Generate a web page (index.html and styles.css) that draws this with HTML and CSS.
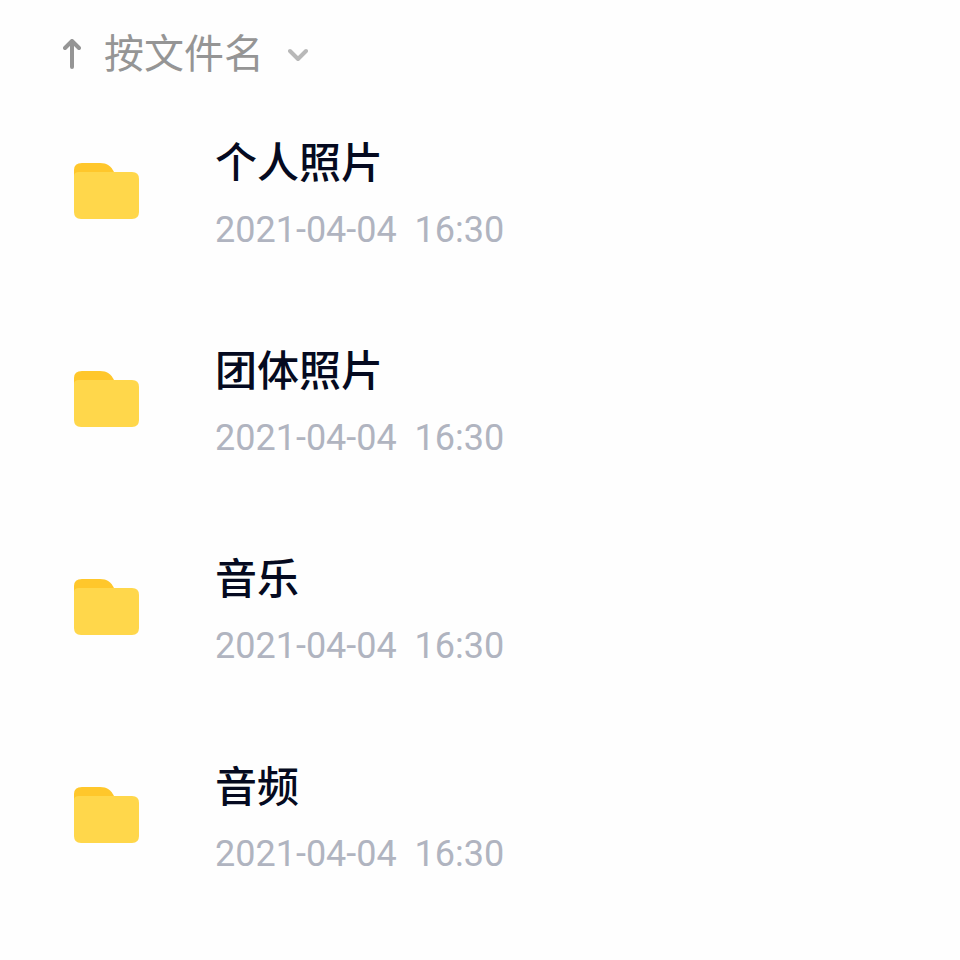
FILE: index.html
```html
<!DOCTYPE html>
<html lang="zh-CN">
<head>
<meta charset="UTF-8" />
<meta name="viewport" content="width=device-width, initial-scale=1" />
<title>文件列表</title>
<link rel="stylesheet" href="styles.css">
</head>
<body>

<!-- 文件夹图标，列表中重复使用 -->
<svg class="sprite" aria-hidden="true">
  <symbol id="folder" viewBox="0 0 66 58">
    <path fill="#ffc72b" d="M0 20V8Q0 1 8 1H26C33 1 37 4 40 10V20Z"/>
    <path fill="#ffd74b" d="M0 14Q0 10 5 10H58Q65 10 65 17V50Q65 57 58 57H7Q0 57 0 50Z"/>
  </symbol>
</svg>

<header class="toolbar">
  <button class="sort" type="button">
    <svg class="sort-arrow" viewBox="0 0 18 32" aria-hidden="true">
      <path d="M9 28V2M2 9L9 2L16 9"/>
    </svg>
    <span class="sort-label">按文件名</span>
    <svg class="sort-caret" viewBox="0 0 20 14" aria-hidden="true">
      <path d="M2 3L10 11L18 3"/>
    </svg>
  </button>
</header>

<main>
  <ul class="file-list">
    <li class="file">
      <svg class="file-icon" aria-hidden="true"><use href="#folder"/></svg>
      <div class="file-info">
        <div class="file-name">个人照片</div>
        <time class="file-time" datetime="2021-04-04T16:30">2021-04-04  16:30</time>
      </div>
    </li>
    <li class="file">
      <svg class="file-icon" aria-hidden="true"><use href="#folder"/></svg>
      <div class="file-info">
        <div class="file-name">团体照片</div>
        <time class="file-time" datetime="2021-04-04T16:30">2021-04-04  16:30</time>
      </div>
    </li>
    <li class="file">
      <svg class="file-icon" aria-hidden="true"><use href="#folder"/></svg>
      <div class="file-info">
        <div class="file-name">音乐</div>
        <time class="file-time" datetime="2021-04-04T16:30">2021-04-04  16:30</time>
      </div>
    </li>
    <li class="file">
      <svg class="file-icon" aria-hidden="true"><use href="#folder"/></svg>
      <div class="file-info">
        <div class="file-name">音频</div>
        <time class="file-time" datetime="2021-04-04T16:30">2021-04-04  16:30</time>
      </div>
    </li>
  </ul>
</main>

</body>
</html>
```
FILE: styles.css
```css
* { box-sizing: border-box; }

body {
  margin: 0;
  background: #fefefe;
  font-family: Roboto, "Noto Sans CJK SC", sans-serif;
}

.sprite { display: none; }

/* 排序栏 */
.toolbar { padding: 25px 63px 3px; }

.sort {
  display: flex;
  align-items: center;
  padding: 0;
  border: none;
  background: none;
  color: #959595;
  font: inherit;
  font-size: 40px;
  line-height: 60px;
  cursor: pointer;
}
.sort svg {
  fill: none;
  stroke: currentColor;
  stroke-linecap: round;
  stroke-linejoin: round;
  stroke-width: 4;
}
.sort-arrow { width: 18px; height: 32px; margin-right: 23px; }
.sort .sort-caret { width: 20px; height: 14px; margin-left: 24px; stroke: #b8b8b8; }

/* 文件列表 */
.file-list { margin: 0; padding: 0; list-style: none; }

.file {
  display: flex;
  align-items: center;
  padding: 42px 74px 44px;
}
.file-icon { flex: none; width: 66px; height: 58px; margin-right: 75px; }
.file-info { display: flex; flex-direction: column; gap: 14px; padding-top: 4px; }
.file-name {
  color: #050a20;
  font-size: 42px;
  font-weight: 500;
  line-height: 60px;
}
.file-time {
  color: #b0b4c0;
  font-size: 36px;
  line-height: 44px;
  white-space: pre;
}
```
